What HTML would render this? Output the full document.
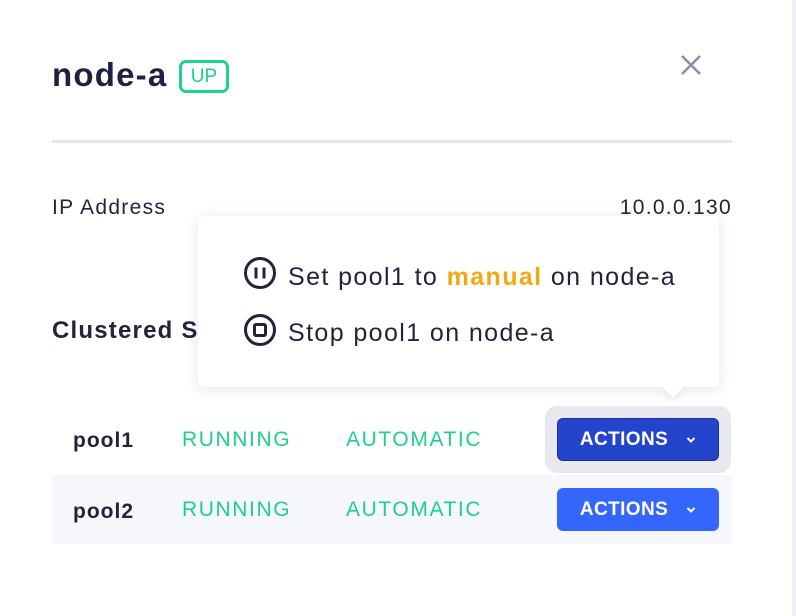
<!DOCTYPE html><html><head><style>
body{margin:0;width:796px;height:616px;background:#fff;position:relative;overflow:hidden;font-family:"Liberation Sans",Arial,sans-serif;color:#22243a}
.a{position:absolute}
.btn{position:absolute;left:557px;width:162px;height:43px;border-radius:6px;color:#fff;font-weight:bold;font-size:19px;letter-spacing:0.4px;display:flex;align-items:center;justify-content:center;gap:18px;box-sizing:border-box}
.g{color:#1fcf8c;font-size:21px;letter-spacing:1.6px}
</style></head><body>
<div class="a" style="left:792px;top:0;width:4px;height:616px;background:#eef0f5"></div>
<div class="a" style="left:52px;top:56px;font-size:33px;font-weight:bold;color:#1f2140;letter-spacing:1.2px">node-a</div>
<div class="a" style="left:179px;top:60px;width:44px;height:27px;border:3px solid #1fd38e;border-radius:7px;color:#1fcf8c;font-size:19px;text-align:center;line-height:27px">UP</div>
<svg class="a" style="left:680px;top:54px" width="22" height="22"><path d="M2 2L20 20M20 2L2 20" stroke="#8a8fa8" stroke-width="2.6"/></svg>
<div class="a" style="left:52px;top:140px;width:680px;height:3px;background:#e4e5f0"></div>
<div class="a" style="left:52px;top:196px;font-size:21px;letter-spacing:1.3px">IP Address</div>
<div class="a" style="right:64px;top:196px;font-size:21px;letter-spacing:1.3px">10.0.0.130</div>
<div class="a" style="left:52px;top:317px;font-size:24px;font-weight:bold;letter-spacing:1.2px">Clustered S</div>
<div class="a" style="left:545px;top:406px;width:186px;height:67px;background:#e8e9ee;border-radius:12px"></div>
<div class="a" style="left:52px;top:475px;width:680px;height:69px;background:#f6f7fa"></div>
<div class="a" style="left:73px;top:429px;font-size:21px;font-weight:bold;letter-spacing:1px">pool1</div>
<div class="a g" style="left:182px;top:428px">RUNNING</div>
<div class="a g" style="left:346px;top:428px">AUTOMATIC</div>
<div class="a" style="left:73px;top:500px;font-size:21px;font-weight:bold;letter-spacing:1px">pool2</div>
<div class="a g" style="left:182px;top:498px">RUNNING</div>
<div class="a g" style="left:346px;top:498px">AUTOMATIC</div>
<div class="btn" style="top:418px;background:#2444cc;border:1.5px solid #1b2f9e">ACTIONS<svg width="10" height="8"><path d="M1.5 2L5 5.5 8.5 2" stroke="#fff" stroke-width="2" fill="none"/></svg></div>
<div class="btn" style="top:488px;background:#3566fb">ACTIONS<svg width="10" height="8"><path d="M1.5 2L5 5.5 8.5 2" stroke="#fff" stroke-width="2" fill="none"/></svg></div>
<div class="a" style="left:198px;top:216px;width:521px;height:171px;background:#fff;border-radius:6px;box-shadow:0 2px 14px rgba(40,50,80,.13)"></div>
<div class="a" style="left:666px;top:381px;width:14px;height:14px;background:#fff;transform:rotate(45deg);box-shadow:3px 3px 6px rgba(40,50,80,.08)"></div>
<svg class="a" style="left:243px;top:256px" width="34" height="34"><circle cx="17" cy="17" r="14.5" fill="none" stroke="#22243a" stroke-width="3"/><path d="M13 11.5v11M21 11.5v11" stroke="#22243a" stroke-width="3"/></svg>
<div class="a" style="left:288px;top:263px;font-size:25px;letter-spacing:1.4px">Set pool1 to <b style="color:#f3a712">manual</b> on node-a</div>
<svg class="a" style="left:243px;top:313px" width="34" height="34"><circle cx="17" cy="17" r="14.5" fill="none" stroke="#22243a" stroke-width="3"/><rect x="11.5" y="11.5" width="11" height="11" rx="1.5" fill="none" stroke="#22243a" stroke-width="3"/></svg>
<div class="a" style="left:288px;top:319px;font-size:25px;letter-spacing:1.4px">Stop pool1 on node-a</div>
</body></html>
